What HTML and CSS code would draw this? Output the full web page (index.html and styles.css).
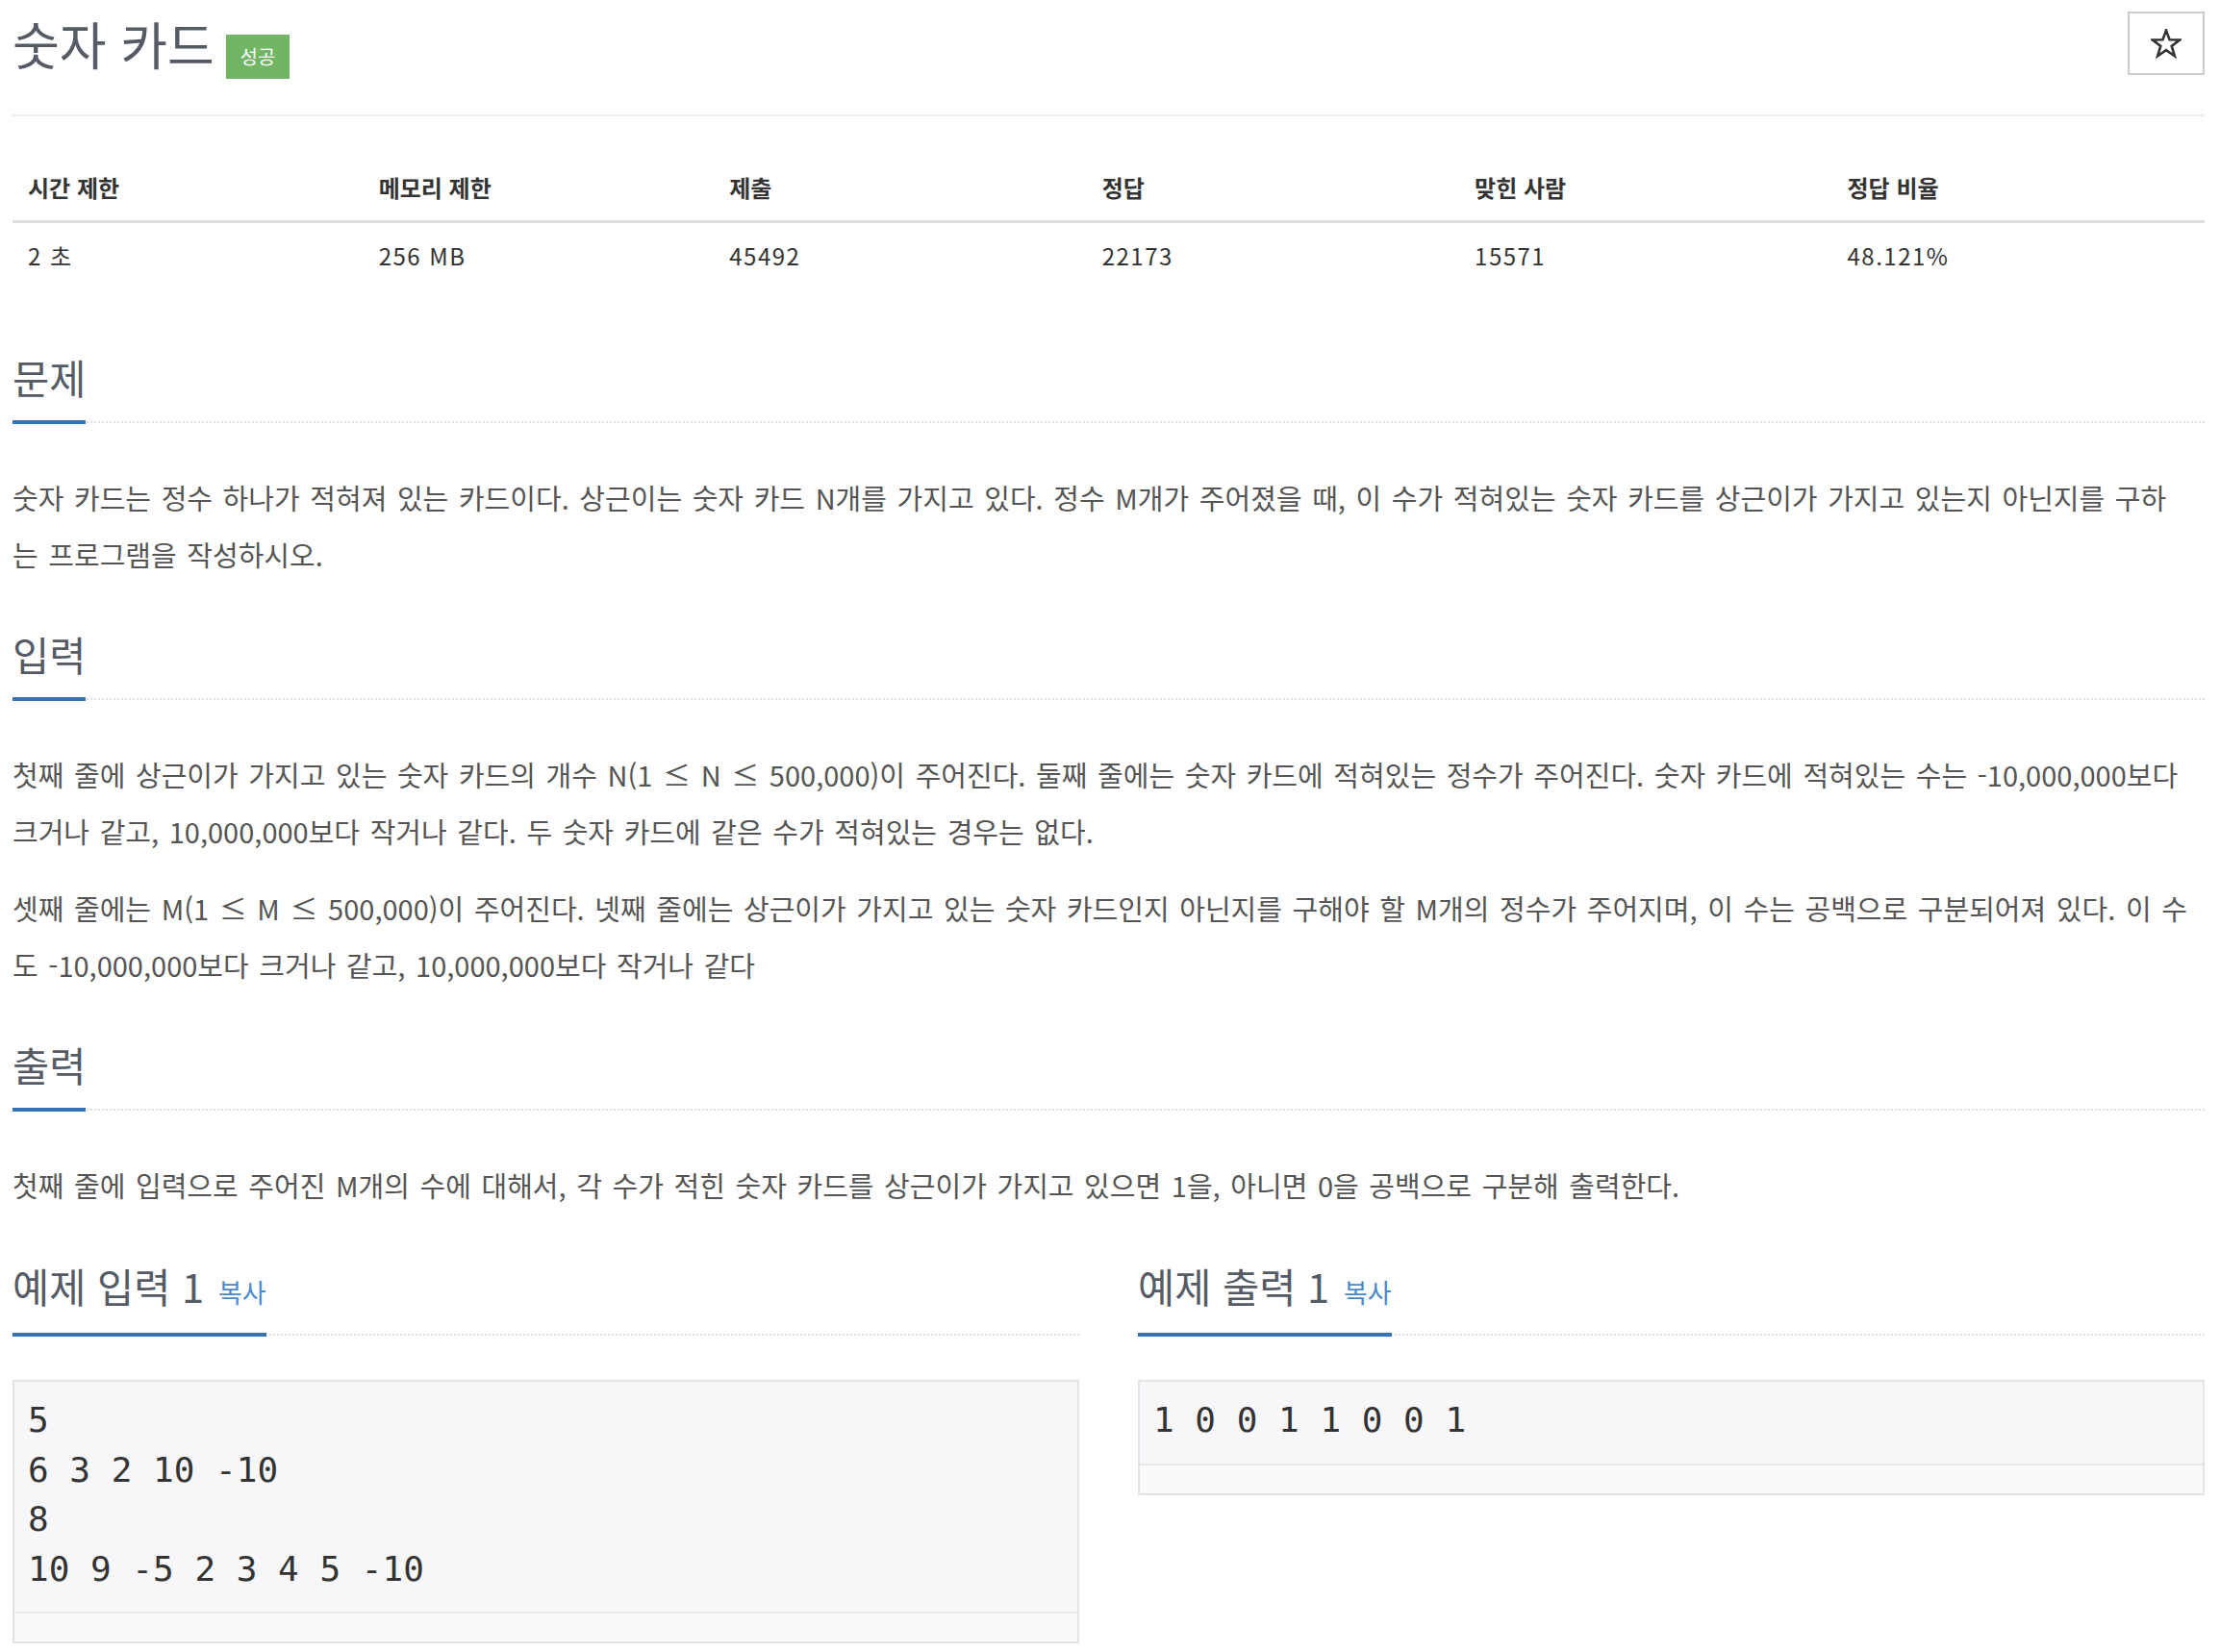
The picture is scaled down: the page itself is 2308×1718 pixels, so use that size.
FILE: index.html
```html
<!DOCTYPE html>
<html lang="ko">
<head>
<meta charset="utf-8">
<title>숫자 카드</title>
<link rel="stylesheet" href="styles.css">
</head>
<body>
<div class="page">
  <div class="page-header">
    <h1 class="title"><span class="title-text">숫자 카드</span><span class="badge">성공</span></h1>
    <button class="star-btn" type="button" aria-label="즐겨찾기">
      <svg width="32" height="31" viewBox="0 0 32 31"><polygon points="16,1.5 19.5,11.2 30.2,11.4 21.7,17.9 24.8,28.2 16,22.1 7.2,28.2 10.3,17.9 1.8,11.4 12.5,11.2" fill="none" stroke="#333" stroke-width="2.6" stroke-linejoin="miter"/></svg>
    </button>
  </div>

  <table class="info">
    <thead>
      <tr><th class="c16">시간 제한</th><th class="c16">메모리 제한</th><th class="c17">제출</th><th class="c17">정답</th><th class="c17">맞힌 사람</th><th class="c17">정답 비율</th></tr>
    </thead>
    <tbody>
      <tr><td>2 초</td><td>256 MB</td><td>45492</td><td>22173</td><td>15571</td><td>48.121%</td></tr>
    </tbody>
  </table>

  <section class="section">
    <div class="headline"><h2>문제</h2></div>
    <p>숫자 카드는 정수 하나가 적혀져 있는 카드이다. 상근이는 숫자 카드 N개를 가지고 있다. 정수 M개가 주어졌을 때, 이 수가 적혀있는 숫자 카드를 상근이가 가지고 있는지 아닌지를 구하<br>는 프로그램을 작성하시오.</p>
  </section>

  <section class="section">
    <div class="headline"><h2>입력</h2></div>
    <p>첫째 줄에 상근이가 가지고 있는 숫자 카드의 개수 N(1 ≤ N ≤ 500,000)이 주어진다. 둘째 줄에는 숫자 카드에 적혀있는 정수가 주어진다. 숫자 카드에 적혀있는 수는 -10,000,000보다<br>크거나 같고, 10,000,000보다 작거나 같다. 두 숫자 카드에 같은 수가 적혀있는 경우는 없다.</p>
    <p>셋째 줄에는 M(1 ≤ M ≤ 500,000)이 주어진다. 넷째 줄에는 상근이가 가지고 있는 숫자 카드인지 아닌지를 구해야 할 M개의 정수가 주어지며, 이 수는 공백으로 구분되어져 있다. 이 수<br>도 -10,000,000보다 크거나 같고, 10,000,000보다 작거나 같다</p>
  </section>

  <section class="section">
    <div class="headline"><h2>출력</h2></div>
    <p>첫째 줄에 입력으로 주어진 M개의 수에 대해서, 각 수가 적힌 숫자 카드를 상근이가 가지고 있으면 1을, 아니면 0을 공백으로 구분해 출력한다.</p>
  </section>

  <div class="samples">
    <section class="sample">
      <div class="headline"><h2>예제 입력 1<button class="copy" type="button">복사</button></h2></div>
      <div class="sample-box">
<pre>5
6 3 2 10 -10
8
10 9 -5 2 3 4 5 -10</pre>
        <div class="scrollbar"></div>
      </div>
    </section>
    <section class="sample">
      <div class="headline"><h2>예제 출력 1<button class="copy" type="button">복사</button></h2></div>
      <div class="sample-box">
<pre>1 0 0 1 1 0 0 1</pre>
        <div class="scrollbar"></div>
      </div>
    </section>
  </div>
</div>
</body>
</html>
```

FILE: styles.css
```css
html, body {
  margin: 0;
  padding: 0;
  background: #ffffff;
}

body {
  font-family: "Noto Sans CJK KR", "Noto Sans", sans-serif;
  color: #555555;
}

.page {
  padding: 0 16px 0 13px;
}

/* ---------- header ---------- */
.page-header {
  height: 121px;
  box-sizing: border-box;
  padding-top: 12px;
  border-bottom: 2px solid #eeeeee;
  display: flex;
  justify-content: space-between;
  align-items: flex-start;
}

.title {
  margin: 2px 0 0;
  display: flex;
  align-items: flex-start;
  font-size: 53px;
  line-height: 62px;
  font-weight: 400;
  color: #555b65;
}

.badge {
  margin: 22px 0 0 12px;
  width: 66px;
  height: 46px;
  display: flex;
  align-items: center;
  justify-content: center;
  background: #72b564;
  color: #ffffff;
  font-size: 20px;
  line-height: 1;
}

.star-btn {
  width: 80px;
  height: 66px;
  box-sizing: border-box;
  border: 2px solid #cccccc;
  border-radius: 0;
  background: #ffffff;
  padding: 0;
  display: flex;
  align-items: center;
  justify-content: center;
}

/* ---------- info table ---------- */
.info {
  width: 100%;
  border-collapse: collapse;
  margin: 40px 0 70px;
  font-size: 24px;
  line-height: 30px;
  color: #333333;
}

.info th,
.info td {
  text-align: left;
  padding: 19px 8px 19px 16px;
}

.info th {
  font-weight: 700;
  border-bottom: 3px solid #dddddd;
}

.info td {
  letter-spacing: 1.5px;
}

.info .c16 { width: 16%; }
.info .c17 { width: 17%; }

/* ---------- sections ---------- */
.section + .section {
  margin-top: 52px;
}

.headline {
  display: flex;
  border-bottom: 2px dotted #dedede;
  margin-bottom: 48px;
}

.headline h2 {
  margin: 0 0 -3px;
  padding: 0 0 23px;
  font-size: 41.5px;
  line-height: 44px;
  font-weight: 400;
  color: #555b65;
  border-bottom: 4px solid #3574b8;
}

.section p {
  margin: 0 0 21px;
  font-size: 29px;
  line-height: 59px;
  word-spacing: 2.5px;
  color: #555555;
}

.copy {
  margin-left: 15px;
  padding: 0;
  border: 0;
  background: none;
  font-family: "Noto Sans CJK KR", "Noto Sans", sans-serif;
  font-size: 27px;
  color: #4a89cb;
}

/* ---------- samples ---------- */
.samples {
  margin-top: 53px;
  display: grid;
  grid-template-columns: 1fr 1fr;
  column-gap: 61px;
  align-items: start;
}

.sample .headline {
  margin-bottom: 46px;
}

.sample-box {
  border: 2px solid #e3e3e8;
  background: #f7f7f9;
}

.sample-box pre {
  margin: 0;
  padding: 14px 14px 19px;
  font-family: "DejaVu Sans Mono", "Liberation Mono", monospace;
  font-size: 36px;
  line-height: 51.5px;
  color: #333333;
}

.scrollbar {
  height: 31px;
  box-sizing: border-box;
  border-top: 2px solid #e8e8e8;
  background: #fafafa;
}
```
